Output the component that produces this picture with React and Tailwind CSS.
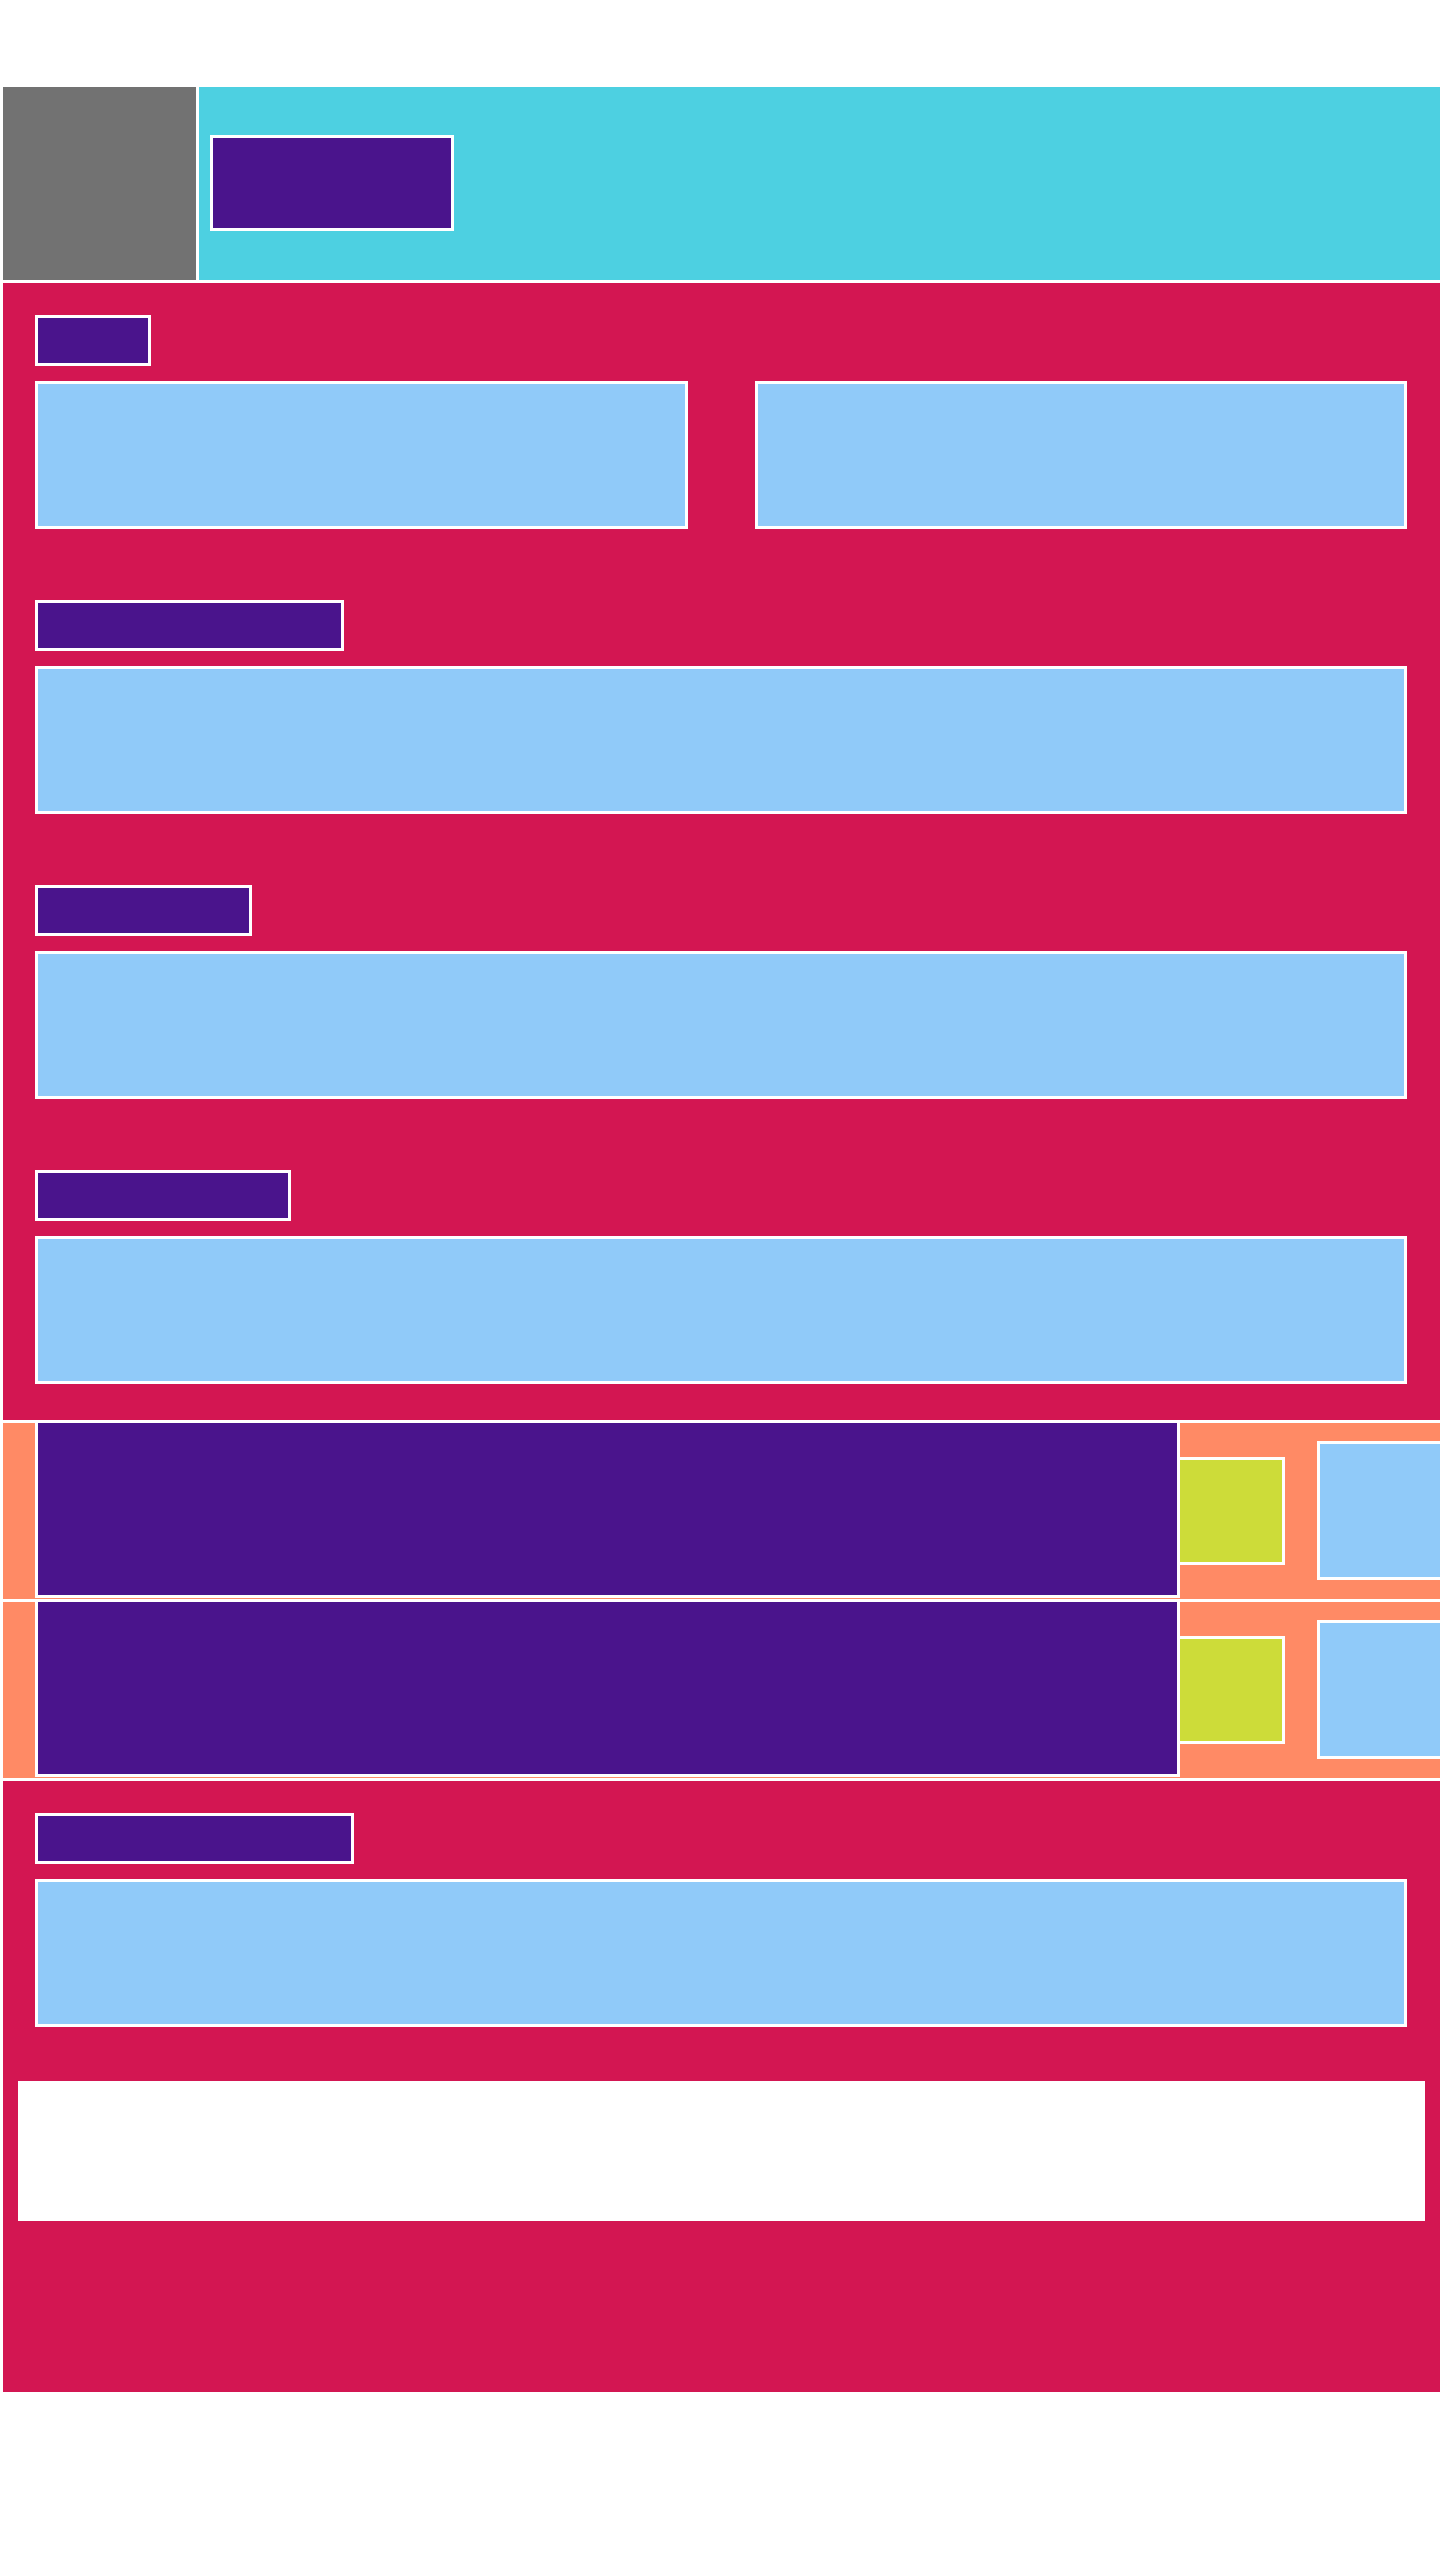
import React from "react";

const frame = "border-[3px] border-white";
const purple = "bg-[#4a148c]";
const sky = "bg-[#90caf9]";

const fields = [
  { id: "email", label: "w-[309px]" },
  { id: "phone", label: "w-[217px]" },
  { id: "address", label: "w-[256px]" }
];

function Label({ width }) {
  return <div className={`h-[51px] ${width} ${frame} ${purple}`} />;
}

function Field({ width = "w-[1372px]" }) {
  return <div className={`h-[148px] ${width} ${frame} ${sky}`} />;
}

function OptionRow() {
  return (
    <div className="ml-[3px] mt-[3px] flex h-[176px] overflow-hidden bg-[#ff8a65]">
      <div className={`ml-[32px] h-[175px] w-[1145px] shrink-0 border-x-[3px] border-b-[3px] border-white ${purple}`} />
      <div className={`-ml-[3px] mt-[34px] h-[108px] w-[108px] shrink-0 ${frame} bg-[#cddc39]`} />
      <div className={`ml-[32px] mt-[18px] h-[139px] w-[200px] shrink-0 ${frame} ${sky}`} />
    </div>
  );
}

export default function App() {
  return (
    <div className="min-h-[2560px] w-full overflow-hidden bg-white pt-[87px]">
      <header className="flex h-[193px]">
        <div className="ml-[3px] w-[193px] shrink-0 bg-[#727272]" />
        <div className="ml-[3px] flex-1 bg-[#4dd0e1] pl-[11px] pt-[48px]">
          <div className={`h-[96px] w-[244px] ${frame} ${purple}`} />
        </div>
      </header>

      <section className="ml-[3px] mt-[3px] bg-[#d31652] px-[32px] pb-[36px] pt-[32px]">
        <Label width="w-[116px]" />
        <div className="mt-[15px] flex gap-[67px]">
          <Field width="w-[653px]" />
          <Field width="w-[652px]" />
        </div>
        {fields.map((field) => (
          <div key={field.id} className="mt-[71px]">
            <Label width={field.label} />
            <div className="mt-[15px]">
              <Field />
            </div>
          </div>
        ))}
      </section>

      <OptionRow />
      <OptionRow />

      <section className="ml-[3px] mt-[3px] bg-[#d31652] pb-[171px] pt-[32px]">
        <div className="px-[32px]">
          <Label width="w-[319px]" />
          <div className="mt-[15px]">
            <Field />
          </div>
        </div>
        <button type="button" className="mx-[15px] mt-[54px] block h-[140px] w-[1407px] bg-white" />
      </section>
    </div>
  );
}
